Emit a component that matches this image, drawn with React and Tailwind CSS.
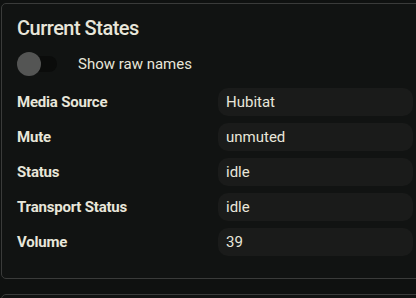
import { useState } from 'react';

const states = [
  { name: 'Media Source', value: 'Hubitat' },
  { name: 'Mute', value: 'unmuted' },
  { name: 'Status', value: 'idle' },
  { name: 'Transport Status', value: 'idle' },
  { name: 'Volume', value: '39' },
];

export default function App() {
  const [raw, setRaw] = useState(false);

  return (
    <div className="h-[298px] w-full overflow-hidden bg-[#0f1110] pt-[3px] font-['Roboto',sans-serif] text-[#e8e6da]">
      {/* Current states card */}
      <div className="ml-[1px] w-[428px] rounded-[5px] border border-[#3a3b3a] bg-[#111312] px-[15px] pt-[10px] pb-[22px]">
        <h2 className="h-[28px] text-[20px] leading-[28px] font-medium tracking-[-0.5px]">Current States</h2>

        <div className="mt-[10px] flex h-[24px] items-center">
          <button
            onClick={() => setRaw(!raw)}
            className="relative h-[24px] w-[40px] shrink-0"
          >
            <span className="absolute top-[4px] left-[10px] h-[16px] w-[30px] rounded-full bg-[#0b0c0b]" />
            <span
              className={`absolute top-0 h-[24px] w-[24px] rounded-full ${raw ? 'left-[16px] bg-[#888]' : 'left-0 bg-[#545554]'}`}
            />
          </button>
          <span className="ml-[21px] text-[15px]">Show raw names</span>
        </div>

        <div className="mt-[12px] flex flex-col gap-[7px]">
          {states.map(s => (
            <div key={s.name} className="flex h-[28px] items-center">
              <div className="w-[201px] shrink-0 text-[15px] font-bold tracking-[-0.2px]">{s.name}</div>
              <div className="flex h-[28px] w-[195px] items-center rounded-[10px] bg-[#1a1b1a] pl-[8px] text-[15px]">
                {s.value}
              </div>
            </div>
          ))}
        </div>
      </div>

      <div className="mt-[15px] ml-[1px] h-[40px] w-[428px] rounded-[5px] border border-[#3a3b3a] bg-[#111312]" />
    </div>
  );
}
